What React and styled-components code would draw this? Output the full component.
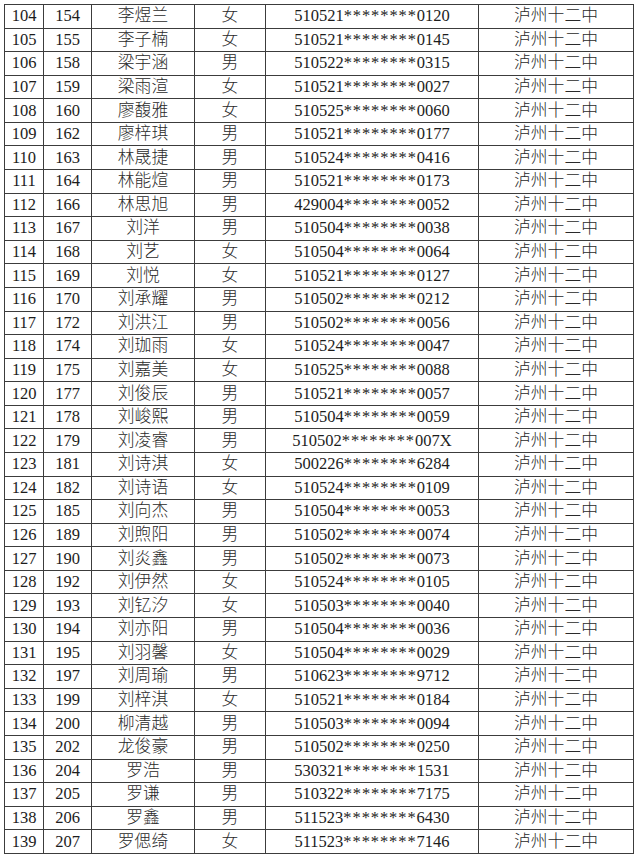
import React from 'react'
import styled, { createGlobalStyle } from 'styled-components'

const GlobalStyle = createGlobalStyle`
  html, body {
    margin: 0;
    padding: 0;
    background: #ffffff;
  }
`

const Page = styled.div`
  padding: 4px 0 0 4px;
  width: 640px;
  height: 857px;
  box-sizing: border-box;
  overflow: hidden;
`

const Table = styled.table`
  border-collapse: collapse;
  table-layout: fixed;
  width: 630px;
  font-family: 'Liberation Serif', 'Noto Sans CJK SC', serif;
  font-size: 16.5px;
  color: #1c1c1c;
`

const Row = styled.tr`
  height: 23.58px;
`

const Cell = styled.td`
  border: 1px solid #3c3c3c;
  padding: 0;
  text-align: center;
  vertical-align: middle;
  white-space: nowrap;
  line-height: 20px;
  font-size: ${(p) => (p.$cjk ? '16.8px' : '16.5px')};
  font-weight: ${(p) => (p.$cjk ? 300 : 400)};
  color: ${(p) => (p.$cjk ? '#2a2a2a' : '#1c1c1c')};
`

const Stars = styled.span`
  letter-spacing: 0.9px;
`

const columns = [39, 48, 103, 71, 213, 155]

const rows = [
  ['104', '154', '李煜兰', '女', '510521', '0120'],
  ['105', '155', '李子楠', '女', '510521', '0145'],
  ['106', '158', '梁宇涵', '男', '510522', '0315'],
  ['107', '159', '梁雨渲', '女', '510521', '0027'],
  ['108', '160', '廖馥雅', '女', '510525', '0060'],
  ['109', '162', '廖梓琪', '男', '510521', '0177'],
  ['110', '163', '林晟捷', '男', '510524', '0416'],
  ['111', '164', '林能煊', '男', '510521', '0173'],
  ['112', '166', '林思旭', '男', '429004', '0052'],
  ['113', '167', '刘洋', '男', '510504', '0038'],
  ['114', '168', '刘艺', '女', '510504', '0064'],
  ['115', '169', '刘悦', '女', '510521', '0127'],
  ['116', '170', '刘承耀', '男', '510502', '0212'],
  ['117', '172', '刘洪江', '男', '510502', '0056'],
  ['118', '174', '刘珈雨', '女', '510524', '0047'],
  ['119', '175', '刘嘉美', '女', '510525', '0088'],
  ['120', '177', '刘俊辰', '男', '510521', '0057'],
  ['121', '178', '刘峻熙', '男', '510504', '0059'],
  ['122', '179', '刘凌睿', '男', '510502', '007X'],
  ['123', '181', '刘诗淇', '女', '500226', '6284'],
  ['124', '182', '刘诗语', '女', '510524', '0109'],
  ['125', '185', '刘向杰', '男', '510504', '0053'],
  ['126', '189', '刘煦阳', '男', '510502', '0074'],
  ['127', '190', '刘炎鑫', '男', '510502', '0073'],
  ['128', '192', '刘伊然', '女', '510524', '0105'],
  ['129', '193', '刘钇汐', '女', '510503', '0040'],
  ['130', '194', '刘亦阳', '男', '510504', '0036'],
  ['131', '195', '刘羽馨', '女', '510504', '0029'],
  ['132', '197', '刘周瑜', '男', '510623', '9712'],
  ['133', '199', '刘梓淇', '女', '510521', '0184'],
  ['134', '200', '柳清越', '男', '510503', '0094'],
  ['135', '202', '龙俊豪', '男', '510502', '0250'],
  ['136', '204', '罗浩', '男', '530321', '1531'],
  ['137', '205', '罗谦', '男', '510322', '7175'],
  ['138', '206', '罗鑫', '男', '511523', '6430'],
  ['139', '207', '罗偲绮', '女', '511523', '7146'],
]

export default function App() {
  return (
    <Page>
      <GlobalStyle />
      <Table>
        <colgroup>
          {columns.map((w, i) => (
            <col key={i} style={{ width: w }} />
          ))}
        </colgroup>
        <tbody>
          {rows.map(([no, id, name, sex, head, tail]) => (
            <Row key={no}>
              <Cell>{no}</Cell>
              <Cell>{id}</Cell>
              <Cell $cjk>{name}</Cell>
              <Cell $cjk>{sex}</Cell>
              <Cell>
                {head}
                <Stars>********</Stars>
                {tail}
              </Cell>
              <Cell $cjk>泸州十二中</Cell>
            </Row>
          ))}
        </tbody>
      </Table>
    </Page>
  )
}
